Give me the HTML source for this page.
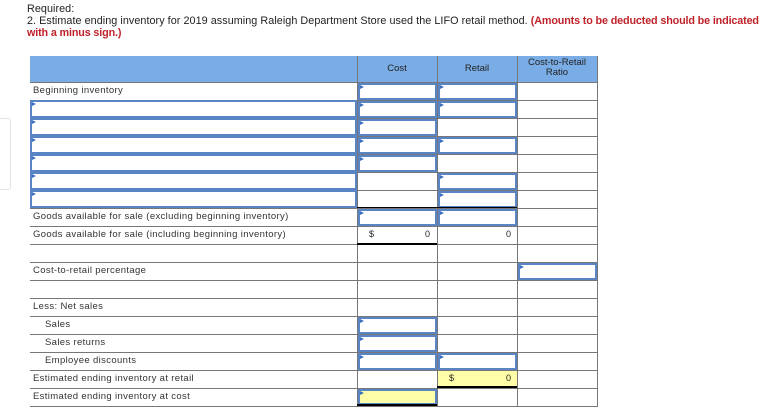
<!DOCTYPE html>
<html><head><style>
body{margin:0;width:782px;height:419px;background:#fff;font-family:"Liberation Sans",sans-serif;position:relative;overflow:hidden}
.t{position:absolute;font-size:10.5px;color:#222}
.h{font-size:10.8px;letter-spacing:.05px}
.g{position:absolute;background:#777}
.in{position:absolute;box-sizing:border-box;border:2px solid #5a85c4;background:#fff}
.in:before{content:"";position:absolute;left:0;top:0;border-left:4px solid #3b6fc0;border-top:2px solid transparent;border-bottom:2px solid transparent}
.y{background:#ffffa8}
.l{position:absolute;font-size:9.5px;letter-spacing:.35px;color:#333;left:33px}
.bk{position:absolute;height:3px;background:#000}
.r{color:#c0222a;font-weight:bold;letter-spacing:-.15px}
.n{font-size:9px!important}
</style></head><body>
<div class="t h" style="left:27px;top:3px">Required:</div>
<div class="t h" style="left:27px;top:15px;width:780px;white-space:nowrap">2. Estimate ending inventory for 2019 assuming Raleigh Department Store used the LIFO retail method. <span class="r">(Amounts to be deducted should be indicated</span></div>
<div class="t h r" style="left:27px;top:27px">with a minus sign.)</div>
<div style="position:absolute;left:-4px;top:118px;width:13px;height:70px;border:1px solid #e4e4e4;border-radius:3px"></div>
<div style="position:absolute;left:30px;top:56px;width:567px;height:26px;background:#7aade5"></div>
<div class="t" style="left:357px;top:63px;width:80px;text-align:center;font-size:9.5px">Cost</div>
<div class="t" style="left:437px;top:63px;width:80px;text-align:center;font-size:9.5px">Retail</div>
<div class="t" style="left:517px;top:58px;width:80px;text-align:center;font-size:9.5px;line-height:10px">Cost-to-Retail<br>Ratio</div>
<div class="g" style="left:357px;top:56px;width:1px;height:350px"></div>
<div class="g" style="left:437px;top:56px;width:1px;height:350px"></div>
<div class="g" style="left:517px;top:56px;width:1px;height:350px"></div>
<div class="g" style="left:597px;top:56px;width:1px;height:351px"></div>
<div class="g" style="left:30px;top:82px;width:568px;height:1px"></div>
<div class="g" style="left:30px;top:100px;width:568px;height:1px"></div>
<div class="g" style="left:30px;top:118px;width:568px;height:1px"></div>
<div class="g" style="left:30px;top:136px;width:568px;height:1px"></div>
<div class="g" style="left:30px;top:154px;width:568px;height:1px"></div>
<div class="g" style="left:30px;top:172px;width:568px;height:1px"></div>
<div class="g" style="left:30px;top:190px;width:568px;height:1px"></div>
<div class="g" style="left:30px;top:208px;width:568px;height:1px"></div>
<div class="g" style="left:30px;top:226px;width:568px;height:1px"></div>
<div class="g" style="left:30px;top:244px;width:568px;height:1px"></div>
<div class="g" style="left:30px;top:262px;width:568px;height:1px"></div>
<div class="g" style="left:30px;top:280px;width:568px;height:1px"></div>
<div class="g" style="left:30px;top:298px;width:568px;height:1px"></div>
<div class="g" style="left:30px;top:316px;width:568px;height:1px"></div>
<div class="g" style="left:30px;top:334px;width:568px;height:1px"></div>
<div class="g" style="left:30px;top:352px;width:568px;height:1px"></div>
<div class="g" style="left:30px;top:370px;width:568px;height:1px"></div>
<div class="g" style="left:30px;top:388px;width:568px;height:1px"></div>
<div class="g" style="left:30px;top:406px;width:568px;height:1px"></div>
<div class="l" style="top:85px">Beginning inventory</div>
<div class="l" style="top:211px">Goods available for sale (excluding beginning inventory)</div>
<div class="l" style="top:229px">Goods available for sale (including beginning inventory)</div>
<div class="l" style="top:265px">Cost-to-retail percentage</div>
<div class="l" style="top:301px">Less: Net sales</div>
<div class="l" style="top:319px;left:45px">Sales</div>
<div class="l" style="top:337px;left:45px">Sales returns</div>
<div class="l" style="top:355px;left:45px">Employee discounts</div>
<div class="l" style="top:373px">Estimated ending inventory at retail</div>
<div class="l" style="top:391px">Estimated ending inventory at cost</div>
<div class="in" style="left:30px;top:100px;width:327px;height:18px"></div>
<div class="in" style="left:30px;top:118px;width:327px;height:18px"></div>
<div class="in" style="left:30px;top:136px;width:327px;height:18px"></div>
<div class="in" style="left:30px;top:154px;width:327px;height:18px"></div>
<div class="in" style="left:30px;top:172px;width:327px;height:18px"></div>
<div class="in" style="left:30px;top:190px;width:327px;height:18px"></div>
<div class="in" style="left:358px;top:83px;width:79px;height:17px"></div>
<div class="in" style="left:358px;top:101px;width:79px;height:17px"></div>
<div class="in" style="left:358px;top:119px;width:79px;height:17px"></div>
<div class="in" style="left:358px;top:137px;width:79px;height:17px"></div>
<div class="in" style="left:358px;top:155px;width:79px;height:17px"></div>
<div class="in" style="left:358px;top:209px;width:79px;height:17px"></div>
<div class="in" style="left:358px;top:317px;width:79px;height:17px"></div>
<div class="in" style="left:358px;top:335px;width:79px;height:17px"></div>
<div class="in" style="left:358px;top:353px;width:79px;height:17px"></div>
<div class="in y" style="left:358px;top:389px;width:79px;height:16px"></div>
<div class="in" style="left:438px;top:83px;width:79px;height:17px"></div>
<div class="in" style="left:438px;top:101px;width:79px;height:17px"></div>
<div class="in" style="left:438px;top:137px;width:79px;height:17px"></div>
<div class="in" style="left:438px;top:173px;width:79px;height:17px"></div>
<div class="in" style="left:438px;top:191px;width:79px;height:17px"></div>
<div class="in" style="left:438px;top:209px;width:79px;height:17px"></div>
<div class="in" style="left:438px;top:353px;width:79px;height:17px"></div>
<div class="in" style="left:518px;top:263px;width:79px;height:17px"></div>
<div class="bk" style="left:357px;top:207px;width:160px;height:1px"></div>
<div class="t n" style="left:369px;top:229px">$</div>
<div class="t n" style="left:425px;top:229px">0</div>
<div class="t n" style="left:506px;top:229px">0</div>
<div class="bk" style="left:357px;top:243px;width:80px;height:2px"></div>
<div style="position:absolute;left:438px;top:371px;width:79px;height:16px;background:#ffffa8"></div>
<div class="t n" style="left:449px;top:373px">$</div>
<div class="t n" style="left:506px;top:373px">0</div>
<div class="bk" style="left:437px;top:386px;width:80px;height:2px"></div>
<div class="bk" style="left:357px;top:404px;width:80px;height:2px"></div>
</body></html>
